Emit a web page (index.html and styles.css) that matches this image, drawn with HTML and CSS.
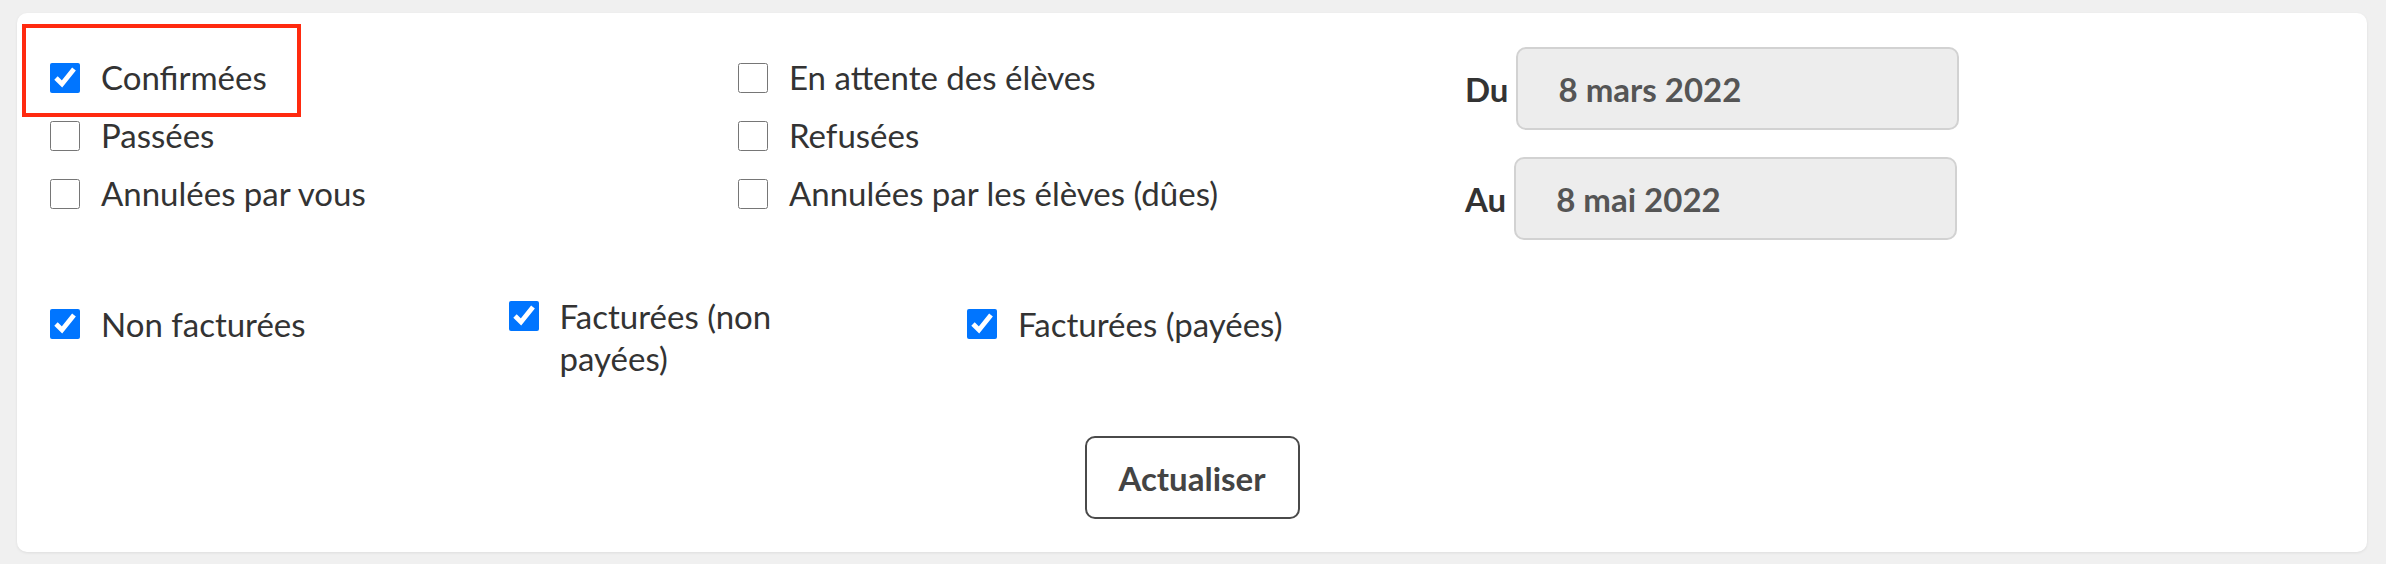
FILE: index.html
```html
<!DOCTYPE html>
<html lang="fr">
<head>
<meta charset="utf-8">
<title>Filtres des réservations</title>
<link rel="stylesheet" href="styles.css">
</head>
<body>
<form class="card">
  <span class="highlight"></span>

  <div class="filters">
    <div class="status-col">
      <label class="check"><input type="checkbox" checked><span>Confirmées</span></label>
      <label class="check"><input type="checkbox"><span>Passées</span></label>
      <label class="check"><input type="checkbox"><span>Annulées par vous</span></label>
    </div>
    <div class="status-col">
      <label class="check"><input type="checkbox"><span>En attente des élèves</span></label>
      <label class="check"><input type="checkbox"><span>Refusées</span></label>
      <label class="check"><input type="checkbox"><span>Annulées par les élèves (dûes)</span></label>
    </div>
    <div class="dates">
      <div class="date-row">
        <span class="date-label">Du</span>
        <div class="date-field">8 mars 2022</div>
      </div>
      <div class="date-row">
        <span class="date-label">Au</span>
        <div class="date-field">8 mai 2022</div>
      </div>
    </div>
  </div>

  <div class="billing">
    <label class="bill single"><input type="checkbox" checked><span>Non facturées</span></label>
    <label class="bill"><input type="checkbox" checked><span>Facturées (non payées)</span></label>
    <label class="bill single"><input type="checkbox" checked><span>Facturées (payées)</span></label>
  </div>

  <div class="actions">
    <button type="button" class="refresh">Actualiser</button>
  </div>
</form>
</body>
</html>
```

FILE: styles.css
```css
html, body {
  margin: 0;
  background: #f0f0f0;
}

body {
  padding: 13px 19px 12px 17px;
  font-family: Lato, "Noto Sans", sans-serif;
  color: #333;
}

.card {
  position: relative;
  box-sizing: border-box;
  height: 539px;
  background: #fff;
  border-radius: 10px;
  box-shadow: 0 1px 3px rgba(0, 0, 0, 0.08);
  padding: 34px 0 0 33px;
}

/* red outline around the first status option */
.highlight {
  position: absolute;
  left: 5px;
  top: 11px;
  width: 279px;
  height: 93px;
  box-sizing: border-box;
  border: 4px solid #ff2a0f;
  pointer-events: none;
}

.filters {
  display: grid;
  grid-template-columns: 688px 727px auto;
  align-items: start;
}

.status-col {
  margin-top: 2px;
  display: flex;
  flex-direction: column;
}

.check,
.bill {
  display: flex;
  gap: 21px;
  font-size: 33px;
  cursor: pointer;
}

.check {
  height: 58px;
  align-items: center;
}

.check span {
  line-height: 40px;
  margin-top: -3px;
}

input[type="checkbox"] {
  width: 30px;
  height: 30px;
  margin: 0;
  flex: none;
}

.dates {
  display: flex;
  flex-direction: column;
  gap: 27px;
}

.date-row {
  display: flex;
  align-items: center;
  gap: 8px;
}

.date-label {
  font-weight: 700;
  font-size: 33px;
  color: #333;
}

.date-field {
  box-sizing: border-box;
  width: 443px;
  height: 83px;
  display: flex;
  align-items: center;
  padding-left: 40px;
  background: #ededed;
  border: 2px solid #d2d2d2;
  border-radius: 10px;
  font-weight: 700;
  font-size: 33px;
  color: #555;
}

.billing {
  display: grid;
  grid-template-columns: repeat(3, 458.5px);
  align-items: start;
  margin-top: 55px;
}

.bill {
  align-items: flex-start;
  line-height: 42px;
}

.bill input[type="checkbox"] {
  margin-top: 6px;
}

.bill span {
  max-width: 300px;
}

.bill.single {
  margin-top: 8px;
}

.actions {
  display: flex;
  justify-content: center;
  margin: 57px 0 0 -33px;
}

.refresh {
  box-sizing: border-box;
  width: 215px;
  height: 83px;
  background: #fff;
  border: 2px solid #4a4a4a;
  border-radius: 10px;
  font-family: inherit;
  font-weight: 700;
  font-size: 33px;
  color: #444;
  cursor: pointer;
}
```
